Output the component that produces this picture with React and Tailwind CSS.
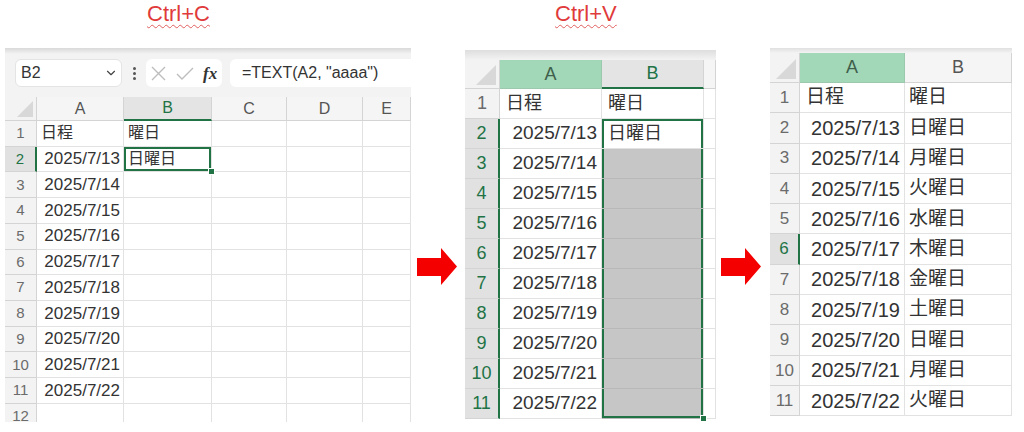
import React from "react";
import { ChevronDown } from "lucide-react";

const dates = Array.from({ length: 10 }, (_, i) => `2025/7/${13 + i}`);
const days = ["日曜日", "月曜日", "火曜日", "水曜日", "木曜日", "金曜日", "土曜日", "日曜日", "月曜日", "火曜日"];

function Corner({ className, tri }) {
  return (
    <div className={`${className} shrink-0 h-full flex items-end justify-end bg-[#f3f3f3] border-r border-b border-[#d4d4d4] pr-[3px] pb-[3px]`}>
      <svg width={tri} height={tri} viewBox="0 0 10 10">
        <polygon points="10,0 10,10 0,10" fill="#d8d8d8" />
      </svg>
    </div>
  );
}

function Arrow() {
  return (
    <svg width="40" height="37" viewBox="0 0 40 37">
      <polygon points="0,10 24,10 24,0 40,18.5 24,37 24,28 0,28" fill="#f40000" />
    </svg>
  );
}

const cell = "shrink-0 border-r border-b border-[#e2e2e2] flex items-center";
const rowHead = "shrink-0 flex items-center justify-center bg-[#f3f3f3] border-r border-b border-[#d4d4d4] text-[#6b6b6b]";
const rowHeadSel = "shrink-0 flex items-center justify-center bg-[#e1e1e1] border-b border-[#d4d4d4] border-r-2 border-r-[#217346] text-[#217346]";
const colHead = "shrink-0 flex items-center justify-center bg-[#f5f5f5] border-r border-b border-[#d4d4d4] text-[#555]";
const colHeadSel = "shrink-0 flex items-center justify-center bg-[#e4e4e4] border-r border-[#d4d4d4] border-b-2 border-b-[#217346] text-[#217346]";
const colHeadGreen = "shrink-0 flex items-center justify-center bg-[#a2d7b7] border-r border-b border-[#9cc9ad] text-[#3f5f4b]";

function Handle() {
  return <span className="absolute right-[-4px] bottom-[-4px] w-[7px] h-[7px] bg-[#217346] border border-white z-10" />;
}

function LeftSheet() {
  const rows = Array.from({ length: 12 }, (_, i) => i + 1);
  return (
    <div className="w-[406px] h-[374px] shrink-0 overflow-hidden bg-white flex flex-col">
      <div className="h-[6px] shrink-0 bg-linear-to-b from-[#d9d9d9] to-[#f3f3f3]" />
      <div className="h-[43px] shrink-0 bg-[#f3f3f3] flex items-start pt-[5px] pl-[10px]">
        <div className="w-[107px] shrink-0 h-[28px] bg-white rounded-[6px] border border-[#e4e4e4] flex items-center justify-between pl-[5px] pr-[3px]">
          <span className="text-[16px] text-[#333]">B2</span>
          <ChevronDown size={14} color="#444" strokeWidth={2} />
        </div>
        <div className="w-[24px] shrink-0 h-[28px] flex flex-col items-center justify-center gap-[2px]">
          <span className="w-[3px] h-[3px] rounded-full bg-[#555]" />
          <span className="w-[3px] h-[3px] rounded-full bg-[#555]" />
          <span className="w-[3px] h-[3px] rounded-full bg-[#555]" />
        </div>
        <div className="w-[76px] shrink-0 h-[28px] bg-white rounded-[6px] flex items-center pl-[5px]">
          <svg width="15" height="15" viewBox="0 0 15 15" className="mr-[10px]">
            <path d="M1 1 L14 14 M14 1 L1 14" stroke="#bdbdbd" strokeWidth="1.4" fill="none" />
          </svg>
          <svg width="18" height="13" viewBox="0 0 18 13" className="mr-[9px]">
            <path d="M1 7 L6 12 L17 1" stroke="#bdbdbd" strokeWidth="1.4" fill="none" />
          </svg>
          <span className="font-['Liberation_Serif',serif] italic font-bold text-[17px] text-[#333] leading-none">fx</span>
        </div>
        <div className="ml-[8px] w-[200px] shrink-0 h-[28px] bg-white rounded-l-[6px] flex items-center pl-[12px]">
          <span className="text-[16px] text-[#333] whitespace-nowrap">=TEXT(A2, "aaaa")</span>
        </div>
      </div>
      <div className="flex shrink-0 h-[24px] text-[16px]">
        <Corner className="w-[32px]" tri={16} />
        <div className={`w-[87px] ${colHead}`}>A</div>
        <div className={`w-[88px] ${colHeadSel}`}>B</div>
        <div className={`w-[75px] ${colHead}`}>C</div>
        <div className={`w-[76px] ${colHead}`}>D</div>
        <div className={`w-[48px] ${colHead}`}>E</div>
      </div>
      {rows.map((r) => (
        <div key={r} className="flex h-[25.73px] shrink-0 text-[#333]">
          <div className={`w-[32px] text-[15px] ${r === 2 ? rowHeadSel : rowHead}`}>{r}</div>
          <div className={`w-[87px] ${cell} ${r === 1 ? "pl-[4px] text-[16px]" : "justify-end pr-[3px] text-[17px]"}`}>
            {r === 1 ? "日程" : r <= 11 ? dates[r - 2] : ""}
          </div>
          <div className={`w-[88px] ${cell} pl-[4px] text-[16px] ${r === 2 ? "relative shadow-[inset_0_0_0_2px_#217346]" : ""}`}>
            {r === 1 ? "曜日" : r === 2 ? "日曜日" : ""}
            {r === 2 && <Handle />}
          </div>
          <div className={`w-[75px] ${cell}`} />
          <div className={`w-[76px] ${cell}`} />
          <div className={`w-[48px] ${cell}`} />
        </div>
      ))}
    </div>
  );
}

function MiddleSheet() {
  const rows = Array.from({ length: 11 }, (_, i) => i + 1);
  const bStyle = (r) => {
    if (r === 2) return "bg-white shadow-[inset_2px_2px_0_#217346,inset_-2px_0_0_#217346]";
    if (r === 11) return "relative bg-[#c6c6c6] border-b-[#b8b8b8] shadow-[inset_2px_-2px_0_#217346,inset_-2px_0_0_#217346]";
    if (r > 2) return "bg-[#c6c6c6] border-b-[#b8b8b8] shadow-[inset_2px_0_0_#217346,inset_-2px_0_0_#217346]";
    return "";
  };
  return (
    <div className="w-[251px] h-[372px] shrink-0 overflow-hidden bg-white flex flex-col">
      <div className="h-[10px] shrink-0 bg-linear-to-b from-[#dedede] to-[#f3f3f3]" />
      <div className="flex shrink-0 h-[29px] text-[18px]">
        <Corner className="w-[35px]" tri={20} />
        <div className={`w-[102px] ${colHeadGreen}`}>A</div>
        <div className={`w-[102px] ${colHeadSel}`}>B</div>
        <div className={`w-[12px] ${colHead}`} />
      </div>
      {rows.map((r) => (
        <div key={r} className="flex h-[30px] shrink-0 text-[#333]">
          <div className={`w-[35px] text-[18px] ${r >= 2 ? rowHeadSel : rowHead}`}>{r}</div>
          <div className={`w-[102px] ${cell} ${r === 1 ? "pl-[6px] text-[18px]" : "justify-end pr-[4px] text-[19px]"}`}>
            {r === 1 ? "日程" : dates[r - 2]}
          </div>
          <div className={`w-[102px] ${cell} pl-[6px] text-[18px] ${bStyle(r)}`}>
            {r === 1 ? "曜日" : r === 2 ? "日曜日" : ""}
            {r === 11 && <Handle />}
          </div>
          <div className={`w-[12px] ${cell}`} />
        </div>
      ))}
    </div>
  );
}

function RightSheet() {
  const rows = Array.from({ length: 11 }, (_, i) => i + 1);
  return (
    <div className="w-[242px] h-[372px] shrink-0 overflow-hidden bg-white flex flex-col">
      <div className="h-[5px] shrink-0 bg-linear-to-b from-[#e0e0e0] to-[#f3f3f3]" />
      <div className="flex shrink-0 h-[30px] text-[18px]">
        <Corner className="w-[30px]" tri={20} />
        <div className={`w-[105px] ${colHeadGreen}`}>A</div>
        <div className={`w-[107px] ${colHead}`}>B</div>
      </div>
      {rows.map((r) => (
        <div key={r} className="flex h-[30.3px] shrink-0 text-[#333]">
          <div className={`w-[30px] text-[17px] ${r === 6 ? rowHeadSel : rowHead}`}>{r}</div>
          <div className={`w-[105px] ${cell} ${r === 1 ? "pl-[6px] text-[19px]" : "justify-end pr-[4px] text-[20px]"}`}>
            {r === 1 ? "日程" : dates[r - 2]}
          </div>
          <div className={`w-[107px] ${cell} pl-[4px] text-[19px]`}>
            {r === 1 ? "曜日" : days[r - 2]}
          </div>
        </div>
      ))}
    </div>
  );
}

function Label({ children }) {
  return (
    <span className="text-[22px] leading-[22px] text-[#e03a3a] underline decoration-wavy decoration-[#e06060] decoration-1 underline-offset-[3px]">
      {children}
    </span>
  );
}

export default function App() {
  return (
    <div className="w-[1024px] h-[432px] bg-white overflow-hidden font-['Liberation_Sans','Noto_Sans_CJK_JP',sans-serif]">
      <div className="h-[48px] flex pt-[3px] pl-[147px]">
        <div className="w-[408px] shrink-0">
          <Label>Ctrl+C</Label>
        </div>
        <div>
          <Label>Ctrl+V</Label>
        </div>
      </div>
      <div className="flex items-start pl-[5px]">
        <LeftSheet />
        <div className="w-[54px] shrink-0 pl-[6px] pt-[200px]">
          <Arrow />
        </div>
        <div className="mt-[2px] shrink-0">
          <MiddleSheet />
        </div>
        <div className="w-[54px] shrink-0 pl-[5px] pt-[200px]">
          <Arrow />
        </div>
        <RightSheet />
      </div>
    </div>
  );
}
